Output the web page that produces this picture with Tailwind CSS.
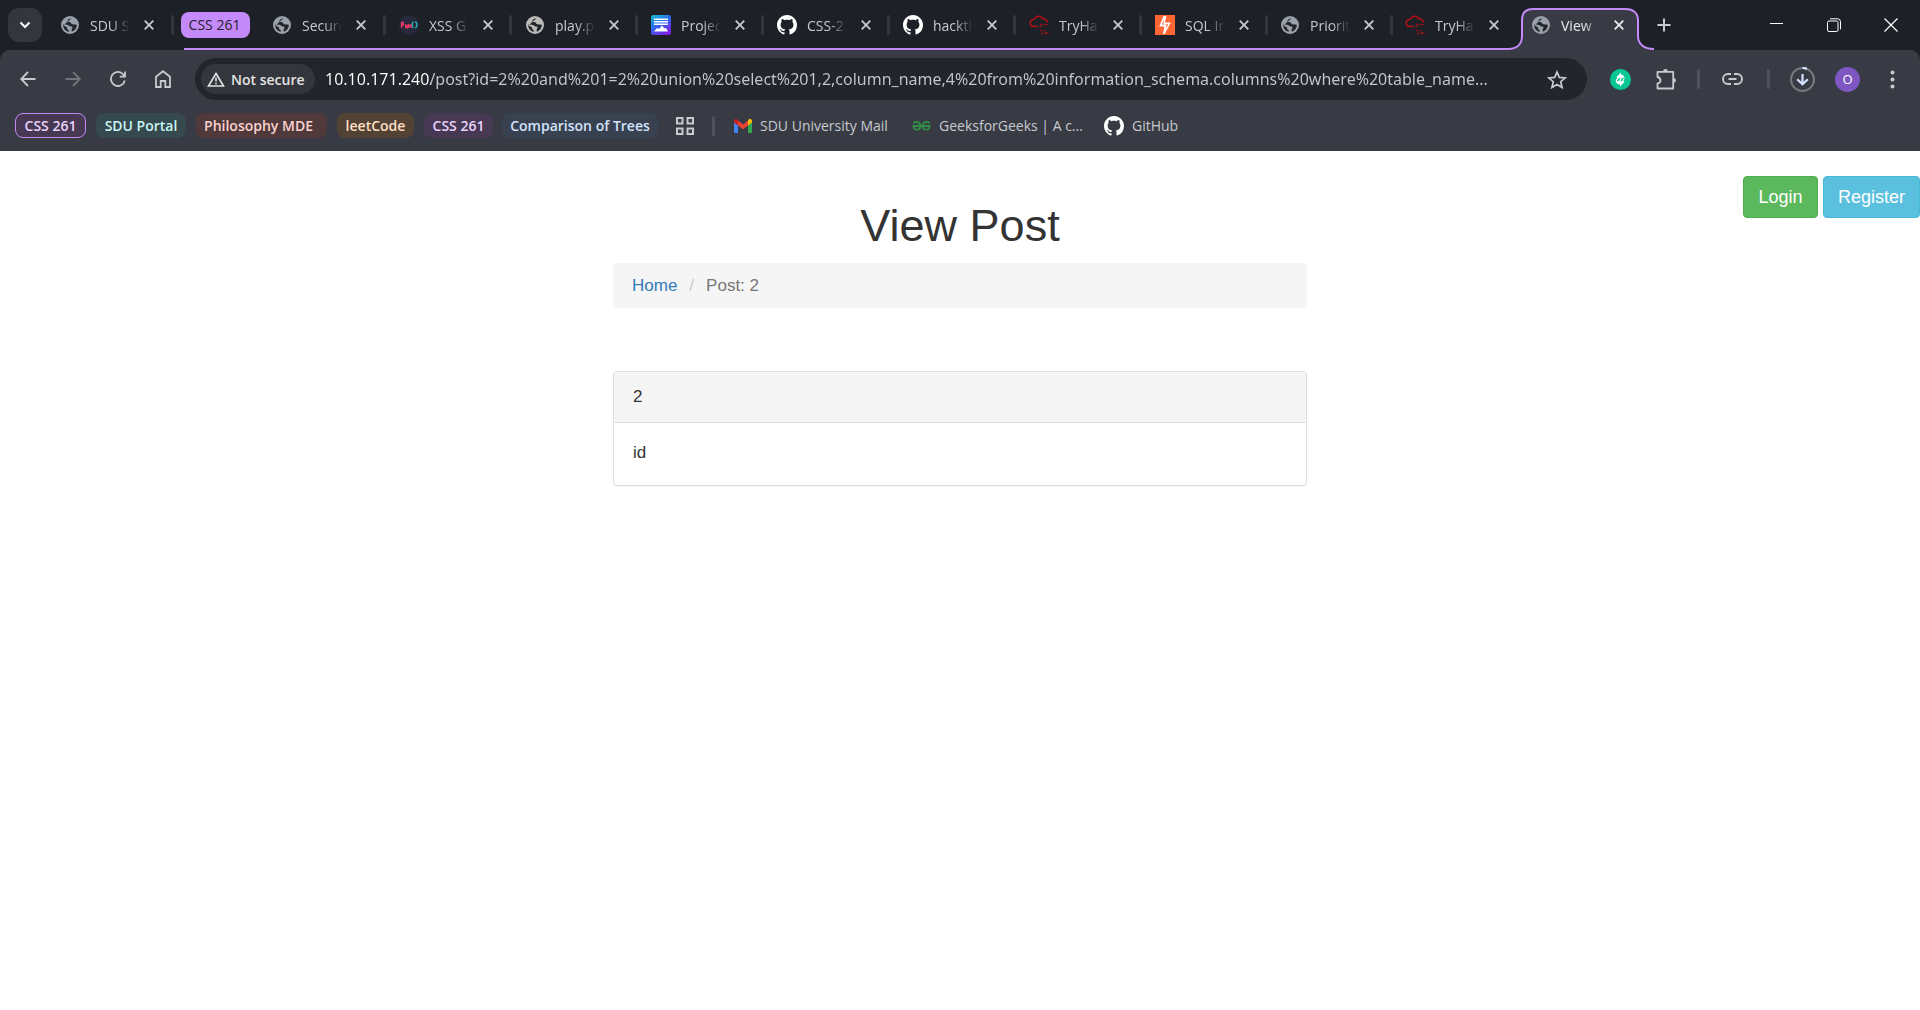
<!DOCTYPE html>
<html lang="en">
<head>
<meta charset="utf-8">
<meta name="viewport" content="width=device-width, initial-scale=1">
<title>View Post</title>
<script src="https://cdn.jsdelivr.net/npm/@tailwindcss/browser@4"></script>
</head>
<body class="min-h-screen bg-white text-[#333]">

<svg width="0" height="0" class="absolute" aria-hidden="true">
  <symbol id="globe" viewBox="0 0 18 18">
    <circle cx="9" cy="9" r="9" fill="currentColor"/>
    <path d="M10.500 2.200C7.500 2.800 6.200 4 6.500 5.200c.3 1 1.800.6 2.800 1 1.200.5.700 1.800 1.900 2.100 1.600.4 3.300-.3 4.700.7-.2 3.200-2.300 5.800-5.200 6.700v-1.900c0-1 .9-1.300.9-2.200 0-.9-.9-1.200-1.900-1.200-1 0-1.300-.7-2.200-1.200C6 8.400 3.800 8.300 2.100 8.700c0 3.600 2.400 6.400 5.700 7.100v-1.600c-1.300-.2-1.700-.9-1.700-2.100 0-.9-.8-1.300-1.700-1.700l-2-.9" fill="#22252c"/>
  </symbol>
  <symbol id="github" viewBox="0 0 16 16">
    <path fill="#fff" d="M8 0C3.580 0 0 3.580 0 8c0 3.540 2.290 6.530 5.470 7.590.4.070.55-.17.55-.38 0-.19-.01-.82-.01-1.490-2.010.37-2.530-.49-2.690-.94-.09-.23-.48-.94-.82-1.130-.28-.15-.68-.52-.01-.53.63-.01 1.080.58 1.230.82.72 1.210 1.870.87 2.330.66.070-.52.28-.87.51-1.070-1.780-.2-3.640-.89-3.640-3.950 0-.87.31-1.590.82-2.150-.08-.2-.36-1.020.08-2.120 0 0 .67-.21 2.200.82.64-.18 1.320-.27 2-.27s1.360.09 2 .27c1.530-1.040 2.200-.82 2.200-.82.44 1.100.16 1.920.08 2.120.51.56.82 1.270.82 2.150 0 3.070-1.870 3.750-3.650 3.950.29.25.54.73.54 1.480 0 1.070-.01 1.930-.01 2.200 0 .21.15.46.55.38A8.010 8.010 0 0 0 16 8c0-4.420-3.580-8-8-8z"/>
  </symbol>
  <symbol id="thm" viewBox="0 0 20 20">
    <path d="M9 11.500H4.200a3.500 3.500 0 0 1-.2-6.900c1.200-.3 1.300 0 1.500-.8A4.600 4.600 0 0 1 13.800 4c2.700-.3 4.900 1.200 4.700 3.500" fill="none" stroke="#b01116" stroke-width="1.500"/>
    <path d="M11 9.500h2.500M15 9.500h3.500M10.500 11.500h2M11 15.500h2M14.500 15.500h1.500M12 18.500h2M15.500 18h4" fill="none" stroke="#9c1217" stroke-width="1.500"/>
  </symbol>
  <symbol id="x" viewBox="0 0 10 10">
    <path d="M.7.7l8.600 8.600M9.300.7L.7 9.300" stroke="currentColor" stroke-width="1.800" fill="none"/>
  </symbol>
</svg>

<header class="bg-[#1d2027] font-['Open_Sans','Noto_Sans',sans-serif] text-[#c7cad1]">
  <!-- Tab strip -->
  <div class="flex h-[50px] items-stretch pl-2">
    <button aria-label="Search tabs" class="mt-2 grid size-[34px] shrink-0 place-items-center rounded-[11px] bg-[#34363e] text-white">
      <svg width="12" height="8" viewBox="0 0 12 8"><path d="M1.500 1.500L6 6l4.500-4.500" fill="none" stroke="currentColor" stroke-width="2"/></svg>
    </button>
    <div class="flex w-[132px] shrink items-center pl-[19px]">
      <svg class="size-[18px] shrink-0 text-[#9aa0a9]"><use href="#globe"/></svg>
      <a href="#" class="ml-[11px] w-[40px] overflow-hidden whitespace-nowrap text-[14px] [mask-image:linear-gradient(90deg,#000_55%,transparent)]">SDU S</a>
      <button aria-label="Close tab" class="ml-3.5"><svg class="size-[10px]"><use href="#x"/></svg></button>
      <span class="ml-auto h-5 w-[3px] rounded bg-[#34363e]"></span>
    </div>
    <div class="relative ml-[7px] flex min-w-0 items-center">
      <button class="mr-[10px] h-[26px] w-[69px] shrink-0 rounded-lg bg-[#c58af9] pr-0.5 pb-px text-[14px] text-[#24202e]">CSS 261</button>

      <div class="flex w-[126px] shrink items-center pl-[13px]">
        <svg class="size-[18px] shrink-0 text-[#9aa0a9]"><use href="#globe"/></svg>
        <a href="#" class="ml-[11px] w-[40px] overflow-hidden whitespace-nowrap text-[14px] [mask-image:linear-gradient(90deg,#000_55%,transparent)]">Secure</a>
        <button aria-label="Close tab" class="ml-3.5"><svg class="size-[10px]"><use href="#x"/></svg></button>
        <span class="ml-auto h-5 w-[3px] rounded bg-[#34363e]"></span>
      </div>
      <div class="flex w-[126px] shrink items-center pl-[13px]">
        <span class="grid size-5 shrink-0 place-items-center rounded-full bg-[#262a3c]">
          <svg width="18" height="8" viewBox="0 0 18 8" fill="none" stroke-width="1.300"><path d="M1.500 7V1.500h1.800v2.500H1.500M5 3.500l.8 3 .9-2 .9 2 .7-3M9 7V4l1.200.8.900-.8V7" stroke="#f0386b"/><path d="M13.500 1c-1.500 0-1.700 5.500 0 5.800M15 1c2.500 0 2.500 5.500 0 5.800" stroke="#1fb5b5"/></svg>
        </span>
        <a href="#" class="ml-[10px] w-[40px] overflow-hidden whitespace-nowrap text-[14px] [mask-image:linear-gradient(90deg,#000_55%,transparent)]">XSS G</a>
        <button aria-label="Close tab" class="ml-3.5"><svg class="size-[10px]"><use href="#x"/></svg></button>
        <span class="ml-auto h-5 w-[3px] rounded bg-[#34363e]"></span>
      </div>
      <div class="flex w-[126px] shrink items-center pl-[14px]">
        <svg class="size-[18px] shrink-0 text-[#b9b9b7]"><use href="#globe"/></svg>
        <a href="#" class="ml-[11px] w-[40px] overflow-hidden whitespace-nowrap text-[14px] [mask-image:linear-gradient(90deg,#000_55%,transparent)]">play.p</a>
        <button aria-label="Close tab" class="ml-3.5"><svg class="size-[10px]"><use href="#x"/></svg></button>
        <span class="ml-auto h-5 w-[3px] rounded bg-[#34363e]"></span>
      </div>
      <div class="flex w-[126px] shrink items-center pl-[13px]">
        <svg class="size-5 shrink-0" viewBox="0 0 20 20"><defs><linearGradient id="pg" x1="0" y1="0" x2=".6" y2="1"><stop offset="0" stop-color="#12c4c9"/><stop offset=".5" stop-color="#2a6cf6"/><stop offset="1" stop-color="#7a22e0"/></linearGradient></defs><rect width="20" height="20" rx="2.500" fill="url(#pg)"/><path d="M3 3.500h14v1.500H3zM3 6h14v1.500H3zM3 8.500h14V10H3zM3 16.500l3-3.500 2 1 3-3.500 2.500 3 1.500-.5 2 3.500z" fill="#fff"/></svg>
        <a href="#" class="ml-[10px] w-[40px] overflow-hidden whitespace-nowrap text-[14px] [mask-image:linear-gradient(90deg,#000_55%,transparent)]">Projec</a>
        <button aria-label="Close tab" class="ml-3.5"><svg class="size-[10px]"><use href="#x"/></svg></button>
        <span class="ml-auto h-5 w-[3px] rounded bg-[#34363e]"></span>
      </div>
      <div class="flex w-[126px] shrink items-center pl-[13px]">
        <svg class="size-5 shrink-0"><use href="#github"/></svg>
        <a href="#" class="ml-[10px] w-[40px] overflow-hidden whitespace-nowrap text-[14px] [mask-image:linear-gradient(90deg,#000_55%,transparent)]">CSS-2</a>
        <button aria-label="Close tab" class="ml-3.5"><svg class="size-[10px]"><use href="#x"/></svg></button>
        <span class="ml-auto h-5 w-[3px] rounded bg-[#34363e]"></span>
      </div>
      <div class="flex w-[126px] shrink items-center pl-[13px]">
        <svg class="size-5 shrink-0"><use href="#github"/></svg>
        <a href="#" class="ml-[10px] w-[40px] overflow-hidden whitespace-nowrap text-[14px] [mask-image:linear-gradient(90deg,#000_55%,transparent)]">hackth</a>
        <button aria-label="Close tab" class="ml-3.5"><svg class="size-[10px]"><use href="#x"/></svg></button>
        <span class="ml-auto h-5 w-[3px] rounded bg-[#34363e]"></span>
      </div>
      <div class="flex w-[126px] shrink items-center pl-[13px]">
        <svg class="size-5 shrink-0"><use href="#thm"/></svg>
        <a href="#" class="ml-[10px] w-[40px] overflow-hidden whitespace-nowrap text-[14px] [mask-image:linear-gradient(90deg,#000_55%,transparent)]">TryHa</a>
        <button aria-label="Close tab" class="ml-3.5"><svg class="size-[10px]"><use href="#x"/></svg></button>
        <span class="ml-auto h-5 w-[3px] rounded bg-[#34363e]"></span>
      </div>
      <div class="flex w-[126px] shrink items-center pl-[13px]">
        <svg class="size-5 shrink-0" viewBox="0 0 20 20"><path fill="#ff6633" d="M0 0h20v20H0z"/><path fill="#fff" d="M8.500 1h2.800L10 7.500h5.800L9.800 19H8l1.300-7.500H4.200z"/><path d="M9 4.500L7 9.500h4.500L10.800 14l2.400-4.700H8.500z" fill="#ff6633"/></svg>
        <a href="#" class="ml-[10px] w-[40px] overflow-hidden whitespace-nowrap text-[14px] [mask-image:linear-gradient(90deg,#000_55%,transparent)]">SQL In</a>
        <button aria-label="Close tab" class="ml-3.5"><svg class="size-[10px]"><use href="#x"/></svg></button>
        <span class="ml-auto h-5 w-[3px] rounded bg-[#34363e]"></span>
      </div>
      <div class="flex w-[125px] shrink items-center pl-[13px]">
        <svg class="size-[18px] shrink-0 text-[#9aa0a9]"><use href="#globe"/></svg>
        <a href="#" class="ml-[11px] w-[40px] overflow-hidden whitespace-nowrap text-[14px] [mask-image:linear-gradient(90deg,#000_55%,transparent)]">Priorit</a>
        <button aria-label="Close tab" class="ml-3.5"><svg class="size-[10px]"><use href="#x"/></svg></button>
        <span class="ml-auto h-5 w-[3px] rounded bg-[#34363e]"></span>
      </div>
      <div class="flex w-[126px] shrink items-center pl-[12px]">
        <svg class="size-5 shrink-0"><use href="#thm"/></svg>
        <a href="#" class="ml-[10px] w-[40px] overflow-hidden whitespace-nowrap text-[14px] [mask-image:linear-gradient(90deg,#000_55%,transparent)]">TryHa</a>
        <button aria-label="Close tab" class="ml-3.5"><svg class="size-[10px]"><use href="#x"/></svg></button>
      </div>
      <span class="absolute bottom-0 left-[3px] right-[11px] h-0.5 bg-[#c58af9]"></span>
    </div>
    <!-- Active tab -->
    <div class="relative flex w-[122px] shrink-0 items-center pl-[13px] text-[#e8eaed]">
      <svg class="absolute -left-[11px] bottom-0 h-[42px] w-[146px]" viewBox="0 0 146 42">
        <path d="M0 42v-1c9 0 14-5 14-13V12C14 5 18 1 25 1h93c7 0 12 4 12 11v16c0 8 6 13 16 13v1z" fill="#393b44"/>
        <path d="M0 41c9 0 14-5 14-13V12C14 5 18 1 25 1h93c7 0 12 4 12 11v16c0 8 6 13 16 13" fill="none" stroke="#c58af9" stroke-width="2"/>
      </svg>
      <svg class="relative size-[18px] shrink-0 text-[#9aa0a9]"><use href="#globe"/></svg>
      <a href="#" class="relative ml-[11px] w-[40px] overflow-hidden whitespace-nowrap text-[14px] [mask-image:linear-gradient(90deg,#000_55%,transparent)]">View</a>
      <button aria-label="Close tab" class="relative ml-[13px]"><svg class="size-[10px]"><use href="#x"/></svg></button>
    </div>
    <button aria-label="New tab" class="ml-[16px] shrink-0"><svg width="14" height="14" viewBox="0 0 14 14"><path d="M7 .5v13M.5 7h13" stroke="currentColor" stroke-width="2"/></svg></button>
    <div class="ml-auto flex shrink-0 pr-px text-white">
      <button aria-label="Minimize" class="grid w-[57px] place-items-center"><svg width="13" height="14" viewBox="0 0 13 14"><path d="M0 5.500h13" stroke="currentColor"/></svg></button>
      <button aria-label="Restore" class="grid w-[57px] place-items-center"><svg width="14" height="14" viewBox="0 0 14 14" fill="none" stroke="currentColor"><rect x=".5" y="3" width="10.500" height="10.500" rx="1.500"/><path d="M3 .8h7.500a3 3 0 0 1 3 3v7.500"/></svg></button>
      <button aria-label="Close" class="grid w-[57px] place-items-center"><svg width="14" height="14" viewBox="0 0 14 14"><path d="M.5.5l13 13M13.500.5l-13 13" stroke="currentColor" stroke-width="1.200"/></svg></button>
    </div>
  </div>

  <div class="rounded-t-[10px] bg-[#393b44]">
    <!-- Toolbar -->
    <div class="flex items-center pr-[25px] pl-5 pt-2">
      <nav class="flex shrink-0 items-center gap-[29px]">
        <button aria-label="Back"><svg width="16" height="16" viewBox="0 0 16 16" fill="none" stroke="currentColor" stroke-width="1.800"><path d="M15.500 8H1.500M8 1L1.200 8 8 15"/></svg></button>
        <button aria-label="Forward" class="text-[#72757d]"><svg width="16" height="16" viewBox="0 0 16 16" fill="none" stroke="currentColor" stroke-width="1.800"><path d="M.5 8h14M8 1l6.800 7L8 15"/></svg></button>
        <button aria-label="Reload"><svg width="16" height="16" viewBox="0 0 16 16" fill="none" stroke="currentColor" stroke-width="1.800"><path d="M14.800 9.500A7 7 0 1 1 13.200 3.300L15 5.200M15 .5v5.200H9.800"/></svg></button>
        <button aria-label="Home"><svg width="16" height="18" viewBox="0 0 16 18" fill="none" stroke="currentColor" stroke-width="1.800"><path d="M1 6.800L8 1.200l7 5.600V17h-4.700v-6H5.700v6H1z"/></svg></button>
      </nav>
      <div class="ml-[24px] flex h-[42px] min-w-0 flex-1 items-center rounded-full bg-[#22252c] pl-1.5 pr-5">
        <button class="flex h-[30px] w-[114px] shrink-0 items-center gap-[6px] rounded-full bg-[#34363e] pl-1.5 text-[14px] font-semibold text-[#e3e3e3]">
          <svg width="18" height="15" viewBox="0 0 18 15"><path d="M9 1.500L16.500 14h-15z" fill="none" stroke="currentColor" stroke-width="1.600"/><path d="M9 5.500v4M9 10.700v1.600" stroke="currentColor" stroke-width="1.600"/></svg>
          <span class="whitespace-nowrap">Not secure</span>
        </button>
        <input aria-label="Address" type="text" value="10.10.171.240/post?id=2%20and%201=2%20union%20select%201,2,column_name,4%20from%20information_schema.columns%20where%20table_name..." class="ml-[10px] min-w-0 flex-1 bg-[linear-gradient(90deg,#fff_106px,#c7c8cc_106px)] bg-clip-text font-['Noto_Sans',sans-serif] text-[16px] text-transparent outline-none">
        <button aria-label="Bookmark this tab" class="shrink-0"><svg width="20" height="19" viewBox="0 0 20 19"><path d="M10 2l2.300 5.400 5.900.5-4.500 3.800 1.400 5.800L10 14.400l-5.100 3.100 1.400-5.800L1.800 7.900l5.900-.5z" fill="none" stroke="currentColor" stroke-width="1.700"/></svg></button>
      </div>
      <div class="ml-[23px] flex shrink-0 items-center">
        <button aria-label="Sync extension"><svg width="21" height="21" viewBox="0 0 21 21"><circle cx="10.500" cy="10.500" r="10.500" fill="#08c792"/><path d="M11 3.500L6.500 8 11 12V9.500c1.500 0 2.500 1.200 2 3 2-1.500 2.500-6.500-2-7zM10 17.500l4.500-4.500L10 9v2.500c-1.500 0-2.500-1.200-2-3-3 1.500-3.500 6.500 2 7z" fill="#fff"/><path d="M7.500 12.200l2.500-3M11 12l2.500-3.200" stroke="#08c792" stroke-width="1.300"/></svg></button>
        <button aria-label="Extensions" class="ml-[25px]"><svg width="21" height="21" viewBox="0 0 21 21" fill="none" stroke="currentColor" stroke-width="1.800" stroke-linejoin="round"><path d="M1.500 2.800h15.700v16.700H1.500v-5c2.200-.4 3-1.500 3-3s-.8-3-3-3.500z"/><path d="M7 2.500a2.400 2.400 0 0 1 4.800 0zM17.500 9a2.400 2.400 0 0 1 0 4.800z" fill="currentColor" stroke="none"/></svg></button>
        <span class="ml-[20px] h-5 w-[3px] rounded bg-[#50525b]"></span>
        <button aria-label="Copy link" class="ml-[22px]"><svg width="21" height="12" viewBox="0 0 21 12" fill="none" stroke="currentColor" stroke-width="1.900"><path d="M9 1H6a5 5 0 0 0 0 10h3M12 1h3a5 5 0 0 1 0 10h-3M6.500 6h8"/></svg></button>
        <span class="ml-[24px] h-5 w-[3px] rounded bg-[#50525b]"></span>
        <button aria-label="Downloads" class="ml-[20px]"><svg width="25" height="25" viewBox="0 0 25 25" fill="none"><circle cx="12.500" cy="12.500" r="11.500" stroke="#77797d" stroke-width="2"/><path d="M12.500 1a11.500 11.500 0 0 1 4.500.9M12.500 7v10M7.200 12.300l5.300 5 5.300-5" stroke="#d3e3fd" stroke-width="2.200"/></svg></button>
        <button aria-label="Profile" class="ml-5 size-[25px] rounded-full bg-[#7e57c2] text-[13px] leading-[25px] text-white">O</button>
        <button aria-label="Menu" class="ml-[30px]"><svg width="5" height="19" viewBox="0 0 5 19" fill="currentColor"><circle cx="2.500" cy="2.500" r="2"/><circle cx="2.500" cy="9.500" r="2"/><circle cx="2.500" cy="16.500" r="2"/></svg></button>
      </div>
    </div>
    <!-- Bookmarks -->
    <nav class="flex h-[51px] items-center pl-[15px] text-[14px] whitespace-nowrap">
      <button class="h-[25px] w-[71px] rounded-lg border border-[#c58af9] bg-[#473853] font-semibold leading-[22px] text-[#e9d2fd]">CSS 261</button>
      <button class="ml-[10px] h-[25px] w-[90px] rounded-lg bg-[#35494e] font-semibold text-[#c8f5f3]">SDU Portal</button>
      <button class="ml-[10px] h-[25px] w-[131px] rounded-lg bg-[#50393a] pr-1.5 font-semibold text-[#fad2cf]">Philosophy MDE</button>
      <button class="ml-[10px] h-[25px] w-[77px] rounded-lg bg-[#524234] font-semibold text-[#fedfc3]">leetCode</button>
      <button class="ml-[10px] h-[25px] w-[69px] rounded-lg bg-[#473853] font-semibold text-[#e9d2fd]">CSS 261</button>
      <button class="ml-[9px] h-[25px] w-[156px] rounded-lg bg-[#384150] font-semibold text-[#d2e3fc]">Comparison of Trees</button>
      <button aria-label="Apps" class="ml-[18px]"><svg width="18" height="18" viewBox="0 0 18 18" fill="none" stroke="currentColor" stroke-width="2"><path d="M1 1h5.500v5.500H1zM11.500 1H17v5.500h-5.500zM1 11.500h5.500V17H1zM11.500 11.500H17V17h-5.500z"/></svg></button>
      <span class="ml-[18px] h-5 w-[3px] rounded bg-[#50525b]"></span>
      <a href="#" class="ml-[19px] flex w-[158px] items-center gap-2"><svg width="18" height="14" viewBox="0 0 18 14" class="shrink-0"><path fill="#4285f4" d="M0 3v9.700C0 13.400.6 14 1.200 14H4V6z"/><path fill="#34a853" d="M18 3v9.700c0 .7-.6 1.300-1.200 1.300H14V6z"/><path fill="#ea4335" d="M4 1.600l5 3.800 5-3.800V6.500l-5 3.800-5-3.800z"/><path fill="#fbbc04" d="M14 1.600v5l4-3V1.900C18 .2 16.200-.6 14.900.3z"/><path fill="#c5221f" d="M4 1.600v5l-4-3V1.900C0 .2 1.800-.6 3.100.3z"/></svg>SDU University Mail</a>
      <a href="#" class="ml-[20px] flex w-[169px] items-center gap-2"><svg width="19" height="10" viewBox="0 0 19 10" class="shrink-0" fill="none" stroke="#2f8d46" stroke-width="1.800"><path d="M.5 5h18M1.300 2.200C3 .6 8.300 0 8.300 5c0 4.800-6.300 5-7 0M17.700 2.200C16 .6 10.700 0 10.700 5c0 4.800 6.300 5 7 0"/></svg>GeeksforGeeks | A c...</a>
      <a href="#" class="ml-[23px] flex items-center gap-2"><svg class="size-5 shrink-0"><use href="#github"/></svg>GitHub</a>
    </nav>
  </div>
</header>

<main class="relative font-['Liberation_Sans',Arial,sans-serif] text-[17px] leading-6">
  <div class="absolute right-0 top-[25px] flex gap-[5px] text-[18px] text-white">
    <button class="h-[42px] w-[75px] rounded-[4px] border border-[#4cae4c] bg-[#5cb85c]">Login</button>
    <button class="h-[42px] w-[97px] rounded-[4px] border border-[#46b8da] bg-[#5bc0de]">Register</button>
  </div>
  <div class="mx-auto max-w-[694px] pt-[50px]">
    <h1 class="text-center text-[45px] leading-[50px]">View Post</h1>
    <ol class="mt-3 flex h-[45px] items-center rounded-[4px] bg-[#f5f5f5] px-[19px]">
      <li><a href="#" class="text-[#337ab7]">Home</a></li>
      <li class="px-3 text-[#ccc]" aria-hidden="true">/</li>
      <li class="text-[#777]">Post: 2</li>
    </ol>
    <section class="mt-[63px] rounded-[4px] border border-[#ddd] shadow-[0_1px_1px_rgba(0,0,0,.05)]">
      <div class="h-[50px] rounded-t-[3px] bg-[#f5f5f5] px-[19px] py-[13px]">2</div>
      <div class="h-[63px] border-t border-[#ddd] px-[19px] py-[18px]">id</div>
    </section>
  </div>
</main>
</body>
</html>
